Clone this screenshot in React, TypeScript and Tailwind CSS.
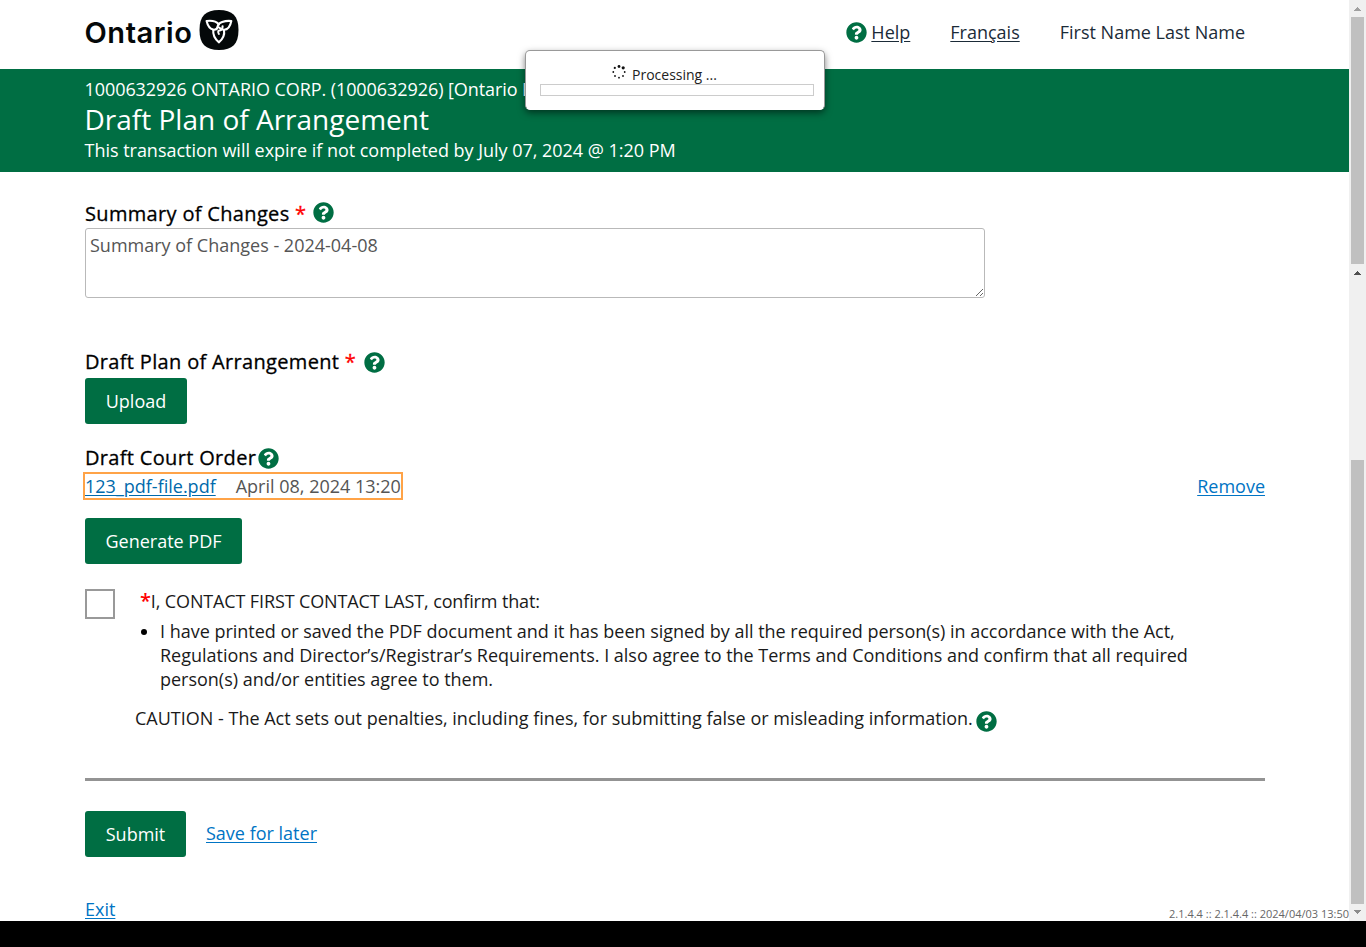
import type { ReactNode } from 'react';
import { FaQuestionCircle } from 'react-icons/fa';

function HelpIcon({ className = '' }: { className?: string }) {
  return <FaQuestionCircle className={`size-[21px] shrink-0 text-[#006e43] ${className}`} />;
}

function Trillium() {
  return (
    <svg viewBox="0 0 40 40" className="ml-[7px] h-10 w-10 shrink-0">
      <path d="M20 0C33.500 0 39.500 6 39.500 20S33.500 40 20 40 .5 34 .5 20 6.500 0 20 0Z" fill="#040809" />
      <g fill="none" stroke="#fff" strokeWidth="2.100" strokeLinejoin="round" strokeLinecap="round">
        <path d="M20 14.500C17 10.800 12 10.400 7.600 11C8.600 15.300 10.400 18.600 14 19.600C16.600 20 18.300 18.700 18.600 17" />
        <path d="M18.600 17C18.800 12.500 26 10.400 32.300 11C31.400 15.600 28.800 19.600 25.200 19.800C22.800 19.800 21.200 18.800 20.300 17.600" />
        <path d="M14.300 19.800C13.700 24.500 16.200 29 19.800 32.300C24 29 25.800 24.500 25 20M23.600 16.200C23.600 19 21.800 20.500 19.500 20.800C18.800 22 19 23 19.800 23.900" />
      </g>
    </svg>
  );
}

function Button({ children, className }: { children: ReactNode; className: string }) {
  return (
    <button className={`h-[46px] rounded-[3px] bg-[#006e43] text-[18px] text-white ${className}`}>
      {children}
    </button>
  );
}

function Spinner() {
  return (
    <svg viewBox="0 0 14 14" className="-mt-[5px] mr-[6px] size-[14px]" fill="#111">
      <circle cx="7" cy="1.500" r="1.400" />
      <circle cx="11.200" cy="2.800" r="1.600" />
      <circle cx="12.700" cy="7" r=".9" />
      <circle cx="11" cy="11" r=".9" />
      <circle cx="7" cy="12.700" r=".9" />
      <circle cx="3" cy="11" r=".9" />
      <circle cx="1.300" cy="7" r=".9" />
      <circle cx="2.800" cy="2.900" r="1.100" />
    </svg>
  );
}

function Arrow({ down = false, color }: { down?: boolean; color: string }) {
  return (
    <svg viewBox="0 0 7 4" className={`h-1 w-[7px] ${down ? 'rotate-180' : ''}`} shapeRendering="crispEdges">
      <path d="M3 0h1v1h1v1h1v1h1v1H0V3h1V2h1V1h1z" fill={color} />
    </svg>
  );
}

function Scrollbar() {
  return (
    <div className="flex w-[17px] shrink-0 flex-col items-center bg-[#f0f0f0]">
      <div className="flex h-[17px] items-center"><Arrow color="#a0a0a0" /></div>
      <div className="h-[247px] w-[13px] bg-[#c0c0c0]" />
      <div className="flex h-[196px] items-start pt-[7px]"><Arrow color="#505050" /></div>
      <div className="h-[444px] w-[13px] bg-[#c0c0c0]" />
      <div className="flex h-[17px] items-center pb-px"><Arrow down color="#8b8b8b" /></div>
    </div>
  );
}

function ProcessingDialog() {
  return (
    <div className="absolute left-[525px] top-[50px] h-[60px] w-[300px] rounded-[5px] border border-[#999] border-b-white bg-white pl-[14px] pr-[10px] pt-[13px] shadow-[0_3px_7px_rgba(0,0,0,0.5)]">
      <div className="flex h-5 items-center pl-[72px] pt-px text-[14px] text-[#222]">
        <Spinner />Processing ...
      </div>
      <div className="h-3 w-[274px] border border-[#ccc]" />
    </div>
  );
}

const link = 'text-[#0074c4] underline underline-offset-2';
const labelText = 'text-[20px] font-medium tracking-[0.33px] text-black [-webkit-text-stroke:0.3px_black]';

export default function App() {
  return (
    <div className="relative flex h-[947px] w-[1366px] flex-col overflow-hidden bg-black font-['Open_Sans','Noto_Sans',sans-serif] text-[18px] leading-6 text-[#1a1a1a]">
      <div className="flex h-[921px]">
        <div className="flex w-[1349px] flex-col bg-white">
          <header className="flex h-[69px] shrink-0 pl-[84.500px] pr-[104px]">
            <div className="flex h-[60px] items-center font-['Inter',sans-serif]">
              <span className="pt-[5px] text-[29px] font-semibold leading-none tracking-[0.55px] text-[#040809]">Ontario</span>
              <Trillium />
            </div>
            <nav className="ml-auto flex h-[63px] items-center text-[#1b2b38]">
              <HelpIcon className="mr-1 mt-[2px]" />
              <a className="underline underline-offset-2">Help</a>
              <a className="ml-10 underline underline-offset-2">Français</a>
              <span className="ml-10">First Name Last Name</span>
            </nav>
          </header>
          <section className="h-[103px] shrink-0 bg-[#006e43] pl-[84.500px] pt-2 text-white">
            <p className="h-6 tracking-[-0.07px]">1000632926 ONTARIO CORP. (1000632926) [Ontario Business</p>
            <h1 className="h-[37px] text-[28px] leading-[37px]">Draft Plan of Arrangement</h1>
            <p className="h-6 tracking-[-0.02px]">This transaction will expire if not completed by July 07, 2024 @ 1:20 PM</p>
          </section>
          <main className="flex h-[749px] flex-col items-start pl-[85px] pr-[84px] pt-[30px]">
            <label className={`flex h-[26px] items-center pb-[2px] ${labelText}`}>
              Summary of Changes&nbsp;<span className="text-[#f00] [-webkit-text-stroke:0.3px_red]">*</span><HelpIcon className="ml-[7px] -mt-[3px]" />
            </label>
            <textarea
              className="block h-[70px] w-[900px] resize rounded-[3px] border border-[#b9b9b9] px-1 py-1 leading-6 text-[#555]"
              defaultValue="Summary of Changes - 2024-04-08"
            />
            <label className={`mt-[51px] flex h-[29px] items-center pb-[3px] ${labelText}`}>
              Draft Plan of Arrangement&nbsp;<span className="text-[#f00] [-webkit-text-stroke:0.3px_red]">*</span><HelpIcon className="ml-2" />
            </label>
            <Button className="w-[102px]">Upload</Button>
            <label className={`mt-5 flex h-7 items-center ${labelText}`}>
              Draft Court Order<HelpIcon className="ml-[2px]" />
            </label>
            <div className="flex h-7 w-full items-center justify-between">
              <div className="-ml-[2px] flex h-7 w-[320px] items-center whitespace-nowrap border-2 border-[#ffa347]">
                <a className="text-[#0069ab] underline underline-offset-2">123_pdf-file.pdf</a>
                <span className="ml-5 text-[#555]">April 08, 2024 13:20</span>
              </div>
              <a className={link}>Remove</a>
            </div>
            <Button className="mt-[18px] w-[157px]">Generate PDF</Button>
            <div className="mt-[25px] flex h-[103px]">
              <input type="checkbox" className="size-[30px] shrink-0 appearance-none border-2 border-[#999] bg-white" />
              <div className="ml-[25px] whitespace-nowrap">
                <p className="h-[30px] tracking-[-0.13px]"><span className="text-[20px] font-semibold text-[#f00]">*</span>I, CONTACT FIRST CONTACT LAST, confirm that:</p>
                <ul className="list-disc pl-5 tracking-[-0.015px] marker:text-black">
                  <li>
                    I have printed or saved the PDF document and it has been signed by all the required person(s) in accordance with the Act,<br />
                    Regulations and Director’s/Registrar’s Requirements. I also agree to the Terms and Conditions and confirm that all required<br />
                    person(s) and/or entities agree to them.
                  </li>
                </ul>
              </div>
            </div>
            <p className="ml-[50px] mt-[14px] flex h-6 items-center whitespace-nowrap">
              CAUTION - The Act sets out penalties, including fines, for submitting false or misleading information.
              <HelpIcon className="ml-[3px] mt-[6px]" />
            </p>
            <hr className="mt-[48px] h-[3px] w-full border-0 bg-[#939393]" />
            <div className="mt-[30px] flex items-center">
              <Button className="w-[101px]">Submit</Button>
              <a className={`ml-5 pb-[2px] ${link}`}>Save for later</a>
            </div>
            <div className="mt-10 flex h-6 w-[1264px] items-center justify-between">
              <a className={link}>Exit</a>
              <span className="pt-[10px] text-[11px] leading-4 text-[#666]">2.1.4.4 :: 2.1.4.4 :: 2024/04/03 13:50</span>
            </div>
          </main>
        </div>
        <Scrollbar />
      </div>
      <ProcessingDialog />
    </div>
  );
}
